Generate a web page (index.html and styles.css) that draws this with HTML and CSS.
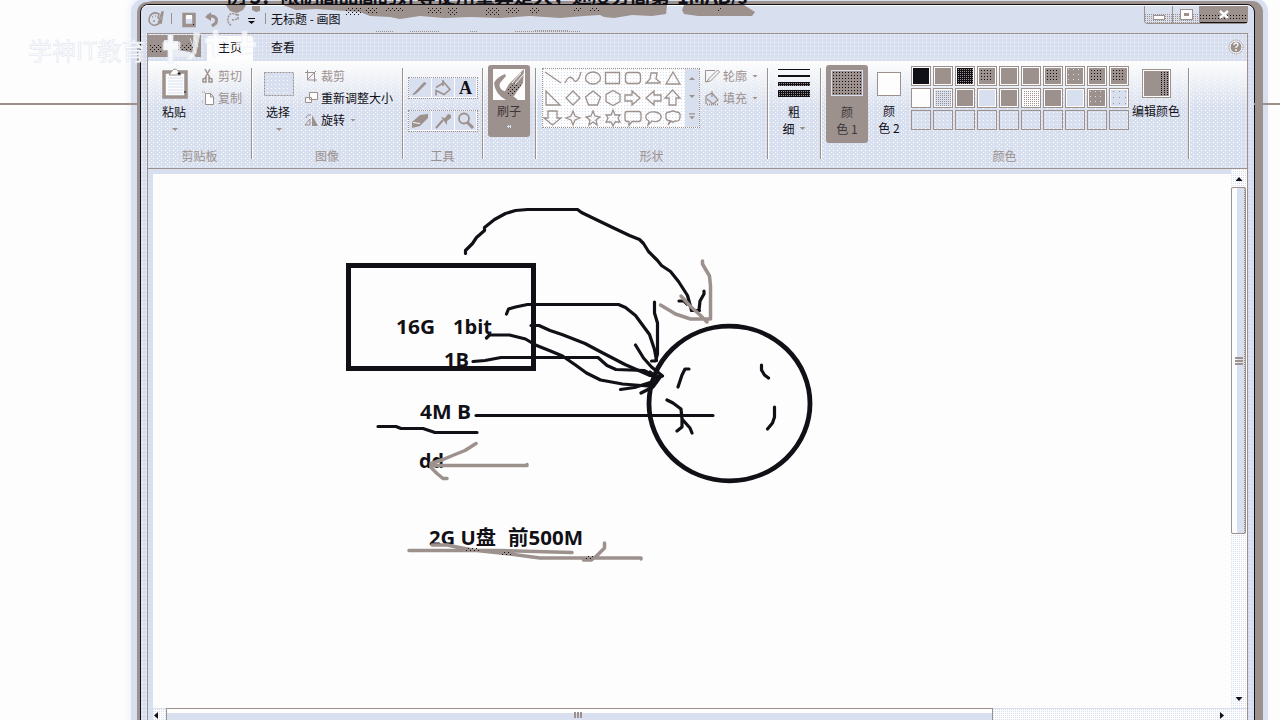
FILE: index.html
```html
<!DOCTYPE html>
<html lang="zh-CN">
<head>
<meta charset="utf-8">
<title>无标题 - 画图</title>
<link rel="stylesheet" href="styles.css">
</head>
<body>
<div class="desktop">
  <div class="rule rule-left"></div>
  <div class="rule rule-right"></div>

  <main class="window">
    <header class="titlebar">
      <svg class="glass" width="540" height="30" viewBox="226 5 540 30">
        <g fill="#9c918d"><path d="M226 5h20l-3 5-6 3-7-2zM252 6h8v5l-4 1-4-2zM283 5h384l-1 9-14 2-20-1-18 3-10-1-4-2-16 1-24 2-30-2-30 2-30-1-26 1-24-2-20 3-10-2-20-1-10-4-14-1-30-2-20 1z"/><path d="M684 5h60l11 7-3 4h-54l-14-2-2-4z"/></g>
        <g fill="url(#dots)"><path d="M346 7h15v8h-15zM366 7h11v6h-11zM385 7h18v5h-18zM427 7h14v6h-14zM448 7h10v8h-10zM486 7h14v9h-14zM506 7h14v7h-14zM530 7h9v6h-9zM573 7h8v5h-8zM590 7h10v5h-10zM718 7h4v5h-4z"/></g>
        <path d="M376 31.500h18M410 31.500h30M470 31.500h8M515 31.500h66M535 30.500h34" stroke="#9c918d" stroke-dasharray="1 1"/>
      </svg>
      <svg class="quick" width="122" height="28" viewBox="148 5 122 28">
        <g fill="none" stroke="#9c918d" stroke-width="1.5">
          <path d="M150 16q3-5 9-2l-1 4 3 2q-2 6-8 5-6-2-3-9zM158 24l4-12 1 0-2 12M152 17h1m2-1h1m-3 5h2"/>
          <path d="M171.500 13v11" stroke-width="1"/>
          <path d="M184 14.500h10v11h-10z" stroke-width="3.500"/>
          <path d="M186 15h6v4h-6z" fill="#fdfdfd" stroke="none"/>
          <path d="M193 24h1v1h-1z" fill="#111016" stroke="none"/>
          <path d="M207 16h5q6 1 4 7l-4 3" stroke-width="3"/>
          <path d="M205 17l6-5v9z" fill="#9c918d" stroke="none"/>
          <path d="M237 15q-7-4-9 3-1 5 4 8M232 20l6-1v-6" stroke-dasharray="2 1"/>
          <path d="M265.500 13v11" stroke-width="1"/>
        </g>
        <path d="M248 18h7v1h-7zM248 21h7l-3.500 3z" fill="#111016"/>
      </svg>
      <h1 class="title">无标题 - 画图</h1>
      <div class="captions">
        <span class="cap cap-min"><i></i></span><span class="cap cap-max"><i></i></span><span class="cap cap-close"><svg width="12" height="9" viewBox="0 0 12 9"><path d="M2 1l8 7M10 1l-8 7" stroke="#fdfdfd" stroke-width="2.500"/></svg></span>
      </div>
    </header>

    <div class="frame">
      <nav class="tabs">
        <span class="file-tab"><svg width="53" height="22" viewBox="0 0 53 22"><path d="M2 10h12v8H2zM28 8l5 3 6-3 8 3v5l-9-1-8 1z" fill="url(#dots)"/><path d="M20 0h5v6h5v9l12 2 6 5H20v-7h-4V5h4z" fill="#e8ecf5"/><path d="M42 3l6 16M46 1l4 11" stroke="#d8dfee"/></svg></span>
        <span class="tab active">主页</span>
        <span class="tab">查看</span>
        <svg class="help" width="16" height="16" viewBox="0 0 16 16"><circle cx="8" cy="8" r="6" fill="#9c918d" stroke="#fdfdfd"/><circle cx="8" cy="8" r="7" fill="none" stroke="#9c918d" stroke-dasharray="1 1"/><path d="M6 6q0-2 2-2t2 2q0 1-2 2v1m0 1v2" fill="none" stroke="#fdfdfd" stroke-width="1.300"/></svg>
      </nav>

      <section class="ribbon">
        <div class="group clip">
          <div class="body">
            <div class="big paste">
              <svg width="26" height="31" viewBox="0 0 26 31"><path d="M2 4h22v25H2z" fill="#fdfdfd" stroke="#9c918d" stroke-width="3.500"/><path d="M6 10h15M6 13h15M6 16h15M6 19h15M6 22h15M6 25h15" stroke="#d8dfee"/><path d="M7 7l3-4q3-4 6 0l3 4z" fill="#fdfdfd" stroke="#9c918d"/><path d="M16 5h2v1h-2zM23 23v2" stroke="#111016"/></svg>
              <span>粘贴</span><b class="arrow"></b>
            </div>
            <div class="stack">
              <div class="cmd dim"><svg width="14" height="16" viewBox="0 0 14 16"><path d="M4 1l5 9M9 1L4 10M2 11l3-1v4H2zM8 10l3 1v3H8z" fill="none" stroke="#9c918d" stroke-width="1.500"/></svg>剪切</div>
              <div class="cmd dim"><svg width="14" height="16" viewBox="0 0 14 16"><path d="M4.500 3.500h5l3 3v8h-8zM9.500 3.500v3.500h3" fill="#fdfdfd" stroke="#9c918d"/><path d="M1 2h1m1 0h1M1 12h1" stroke="#9c918d"/></svg>复制</div>
            </div>
          </div>
          <div class="label">剪贴板</div>
        </div>

        <div class="group image">
          <div class="body">
            <div class="big select">
              <svg width="32" height="31" viewBox="0 0 32 31"><path d="M1.500 4.500h29v23h-29z" fill="#d8dfee" stroke="#9c918d" stroke-dasharray="2 1"/><path d="M4 8.500h24M4 12.500h24M4 16.500h24M4 20.500h24M4 24.500h24" stroke="#fdfdfd" stroke-dasharray="1 3"/></svg>
              <span>选择</span><b class="arrow"></b>
            </div>
            <div class="stack">
              <div class="cmd dim"><svg width="14" height="14" viewBox="0 0 14 14"><path d="M3.500 1v10H13M1 3.500h9.500V13M4 10l8-8" fill="none" stroke="#9c918d"/></svg>裁剪</div>
              <div class="cmd"><svg width="14" height="14" viewBox="0 0 14 14"><path d="M5.500 1.500h8v7h-8zM1.500 6.500h6v5h-6z" fill="#fdfdfd" stroke="#9c918d"/></svg>重新调整大小</div>
              <div class="cmd"><svg width="14" height="14" viewBox="0 0 14 14"><path d="M8 2l6 11H8z" fill="#9c918d"/><path d="M1 12h5V6zM2 5q1-4 5-3" fill="none" stroke="#9c918d"/></svg>旋转<b class="arrow side"></b></div>
            </div>
          </div>
          <div class="label">图像</div>
        </div>

        <div class="group tools">
          <div class="body">
            <svg class="tool-row" width="70" height="22" viewBox="0 0 70 22"><path class="toolbox" d="M.5.5h68v20H.5zM23.500 1v19M46.500 1v19"/><path d="M5 17.500l11-12 2 1-10 10z" fill="#9c918d" stroke="#9c918d"/><path d="M28 10.500l8-5 6 7-6 5-8-4v5M35 3v6" fill="none" stroke="#9c918d" stroke-width="1.600"/><text x="51" y="17" class="letter">A</text></svg>
            <svg class="tool-row" width="70" height="22" viewBox="0 0 70 22"><path class="toolbox" d="M.5.5h68v20H.5zM23.500 1v19M46.500 1v19"/><path d="M4 12l8-7 8-1v4l-8 8-8 2z" fill="#9c918d"/><path d="M5 12.500l7 1" stroke="#fdfdfd"/><path d="M28 18l7-8" stroke="#9c918d" stroke-width="2"/><path d="M33 7l4 1 3-4 3 1v3l-4 3v4z" fill="#9c918d"/><circle cx="56" cy="8.500" r="5" fill="none" stroke="#9c918d" stroke-width="1.800"/><path d="M59 12l6 6" stroke="#9c918d" stroke-width="3"/></svg>
          </div>
          <div class="label">工具</div>
        </div>

        <div class="group brush">
          <div class="pressed">
            <svg width="34" height="31" viewBox="0 0 34 31"><path d="M1 0h32v31H1z" fill="#fdfdfd"/><path d="M2 14q1 11 12 17h12q-8-7-14-9-6-3-4-8l6-7-1-2q-8 3-11 9z" fill="#9c918d"/><path d="M32 0L17 15l-5 9 3 6 7-3 9-13z" fill="#9c918d"/><path d="M29 4L20 14M32 5L23 15" stroke="#fdfdfd"/><path d="M15 21l8-7 6 2-7 9-7 3z" fill="url(#dots)"/></svg>
            <span>刷子</span><b></b>
          </div>
        </div>

        <div class="group shapes">
          <div class="body">
            <div class="gallery">
              <svg width="142" height="60" viewBox="543 68 142 60">
                <g fill="none" stroke="#9c918d" stroke-width="1.300">
                  <path d="M545 72l16 11M565 83q4-9 8-4 4 7 8-7M605.500 72.500h14v11h-14zM646 83h14v-1l-4-3 1-6h-6l-1 6zM673 72l7 12h-14z"/>
                  <ellipse cx="593" cy="78" rx="7.500" ry="6"/><rect x="625.500" y="72.500" width="15" height="11" rx="3"/>
                  <path d="M546 91v14h14zM573 91l7 7-7 7-7-7zM593 91l7.500 6-3 8h-9l-3-8zM613 90.500l7 4v7l-7 4-7-4v-7zM625 95h7v-4l8 7-8 7v-4h-7zM661 95h-7v-4l-8 7 8 7v-4h7zM669 105v-7h-4l7.500-8 7.500 8h-4v7z"/>
                  <path d="M548 111v7h-4l8.500 7 8.500-7h-4v-7zM573 111l2 5 5 2-5 2-2 5-2-5-5-2 5-2zM593 111l2 5 5 1-4 3 1 5-4-3-4 3 1-5-4-3 5-1zM613 110l2 5h5l-2 3 2 4h-5l-2 4-2-4h-5l2-4-2-3h5z"/>
                  <path d="M627 111.500h12q2 0 2 3v4q0 3-2 3h-7l-3 4v-4h-2q-2 0-2-3v-4q0-3 2-3zM649 121q-4-2-3-5 2-5 9-4 7 1 6 6-2 5-9 3l-4 4zM670 121q-5-1-4-5-1-4 4-4 3-2 6 0 5 0 4 5 0 5-5 4-2 2-4 0l-3 4z"/>
                </g>
              </svg>
              <div class="spin"><i class="up"></i><i></i><i class="more"></i></div>
            </div>
            <div class="stack">
              <div class="cmd dim"><svg width="16" height="16" viewBox="0 0 16 16"><path d="M11 2.500H1.500V14l5-1 9-9-2-2-8 8-3 4" fill="none" stroke="#9c918d"/></svg>轮廓<b class="arrow side"></b></div>
              <div class="cmd dim"><svg width="16" height="16" viewBox="0 0 16 16"><path d="M2 14V6l6-3 6 7-5 4-6-5M8 1v6" fill="#d8dfee" stroke="#9c918d" stroke-width="1.200"/><path d="M3 14.500h12" stroke="#9c918d" stroke-width="2" stroke-dasharray="1 1"/></svg>填充<b class="arrow side"></b></div>
            </div>
          </div>
          <div class="label">形状</div>
        </div>

        <div class="group size">
          <div class="bars"><i></i><i></i><i></i><i></i></div>
          <span>粗</span><span class="inline">细<b class="arrow side"></b></span>
        </div>

        <div class="group colors">
          <div class="body">
            <div class="pressed color-one"><i></i><span>颜</span><span>色 1</span></div>
            <div class="color-two"><i></i><span>颜</span><span>色 2</span></div>
            <div class="palette">
              <i class="k"></i><i class="b"></i><i class="b dense"></i><i class="b dotted"></i><i class="b"></i><i class="b"></i><i class="b dotted"></i><i class="b sparse"></i><i class="b dotted"></i><i class="b dotted"></i>
              <i></i><i class="mix"></i><i class="b"></i><i class="l"></i><i class="b"></i><i class="mix pale"></i><i class="b"></i><i class="l"></i><i class="b sparse"></i><i class="l few"></i>
              <i class="e"></i><i class="e"></i><i class="e"></i><i class="e"></i><i class="e"></i><i class="e"></i><i class="e"></i><i class="e"></i><i class="e"></i><i class="e"></i>
            </div>
            <div class="edit"><i></i><span>编辑颜色</span></div>
          </div>
          <div class="label">颜色</div>
        </div>
      </section>

      <section class="workspace">
        <svg class="paper" width="1078" height="534" viewBox="153 174 1078 534">
          <defs><pattern id="dots" width="4" height="4" patternUnits="userSpaceOnUse"><path d="M0 0h1v1H0zM2 2h1v1H2z" fill="#111016"/></pattern></defs>
          <g class="words">
            <text x="396" y="334" textLength="39" lengthAdjust="spacingAndGlyphs">16G</text><text x="453" y="334" textLength="39" lengthAdjust="spacingAndGlyphs">1bit</text>
            <text x="444" y="367" textLength="25" lengthAdjust="spacingAndGlyphs">1B</text>
            <text x="420" y="419" textLength="51" lengthAdjust="spacingAndGlyphs">4M B</text>
            <text x="419" y="468" textLength="25" lengthAdjust="spacingAndGlyphs">dd</text>
            <text x="429" y="545" textLength="67" lengthAdjust="spacingAndGlyphs">2G U盘</text><text x="508" y="545" textLength="75" lengthAdjust="spacingAndGlyphs">前500M</text>
          </g>
          <g class="ink">
            <path stroke-width="5" class="box" d="M348.500 265.500h185v103h-185z"/>
            <ellipse class="disc" cx="729.500" cy="403.500" rx="80.500" ry="77.300"/>
            <path d="M465.500 253.500v-3l7-7 4-6 8-7v-3l10-8 11-6 10-3 12-1h50l4 3 29 14 19 9 10 4 4 4 5 8 9 9 4 5 9 6 8 10 9 14 3 11 1 4h8M679 301h5l3 3M704 291v3l-4 7-1 9"/>
            <path d="M506.500 314l2-5 7-2 12-2.500h91l7 3 10 8 14 19 5 15 2 11M654.500 302v11l3 10v31l-2 7h-4"/>
            <path d="M531 325.500h8l11 5 12 4 23 9 15 8 25 13 25 11 11 1"/>
            <path d="M486.500 338l3-3h20l16 4 10 6 15 6 12 5 13 9 11 8 14 7 22 4 25 2 9-4"/>
            <path d="M473 361.500l12-1 16-3h97l9 8 9 4 28 1 10 5M635.500 345l8 13 8 9 11 9M620.500 389.500l14-2 22-7M641 393l12-6 8-11M650 372l8 7"/>
            <path d="M476 415.500h237M689 369h-4l-3 6-4 12M667 400l6 3 8 6 1 10 8 9 2 5M677 431l5-4v-9M761.500 365v5l3 5 4 3M774.500 407v10l-2 6-5 6"/>
            <path d="M378 426.500h18l5 2h22l12 4h42"/>
          </g>
          <g class="ink faded">
            <path d="M702.500 261v3l7 12 1 10v33h-20l-15-5-15-9M681 296l9 10 10 9 7 7"/>
            <path d="M476 443.500l-11 7-10 4-12 5-12 4v4l6 6 6 5h4M431 465.500h96v-1"/>
            <path d="M409 550.500h90l73 2M432 545h15l25 5 38 4 30 4h101v1M604.500 543v5l-8 8-5 4h-8"/>
          </g>
          <path d="M466 548h14v4h-14zM502 551h10v4h-10zM586 556h8v4h-8z" fill="url(#dots)"/>
        </svg>
        <div class="vscroll"><b class="tri-up"></b><div class="vthumb"><i></i></div><b class="tri-down"></b></div>
        <div class="hscroll"><b class="tri-left"></b><div class="hthumb"><i></i></div><b class="tri-right"></b></div>
      </section>
    </div>
  </main>

  <div class="behind">例 3：限制高品高的好等使用量算是大，速度分高第&nbsp; 1MAB/s</div>
  <div class="watermark">学神IT教育</div>
  <svg class="mark" width="100" height="40" viewBox="0 0 100 40"><path d="M10 8h5v7h7v8h-7v13h-5V23H5v-8h5zM36 5l6 1-4 20-5 7-4-1 6-8zM55 3h5v8h9v5h-9v13h-5V16h-8v-5h8zM84 4h5v11h9v5H78v-5h6zM61 25l12-7M80 28l15-2" fill="#fdfdfd" stroke="#e9edf6" opacity=".75"/></svg>
</div>
</body>
</html>
```

FILE: styles.css
```css
:root {
  --white: #fdfdfd;
  --blue: #d8dfee;
  --brown: #9c918d;
  --ink: #111016;
  --dot-w: conic-gradient(from 270deg at 1px 1px, var(--white) 90deg, transparent 0);
  --dot-b: conic-gradient(from 270deg at 1px 1px, var(--brown) 90deg, transparent 0);
  --dot-k: conic-gradient(from 270deg at 1px 1px, var(--ink) 90deg, transparent 0);
  --dot-l: conic-gradient(from 270deg at 1px 1px, var(--blue) 90deg, transparent 0);
}
* { box-sizing: border-box; }
body {
  margin: 0;
  background: var(--white);
  color: var(--ink);
  font: 12px/16px "Noto Sans CJK SC", sans-serif;
}
svg { display: block; flex: none; }
.desktop { position: relative; width: 1280px; height: 720px; overflow: hidden; padding: 4px 25px 0 140px; }
.rule { position: absolute; top: 103px; height: 2px; background: var(--brown); }
.rule-left { left: 0; width: 140px; }
.rule-right { right: 0; width: 26px; }
.behind {
  position: absolute; left: 226px; top: -15px; width: 540px; height: 19px;
  font-size: 20px; line-height: 21px; font-weight: 700; letter-spacing: -.55px; white-space: nowrap; overflow: hidden;
}

/* window chrome */
.window {
  height: 730px;
  border: 1px solid var(--ink);
  border-radius: 8px 8px 0 0;
  background: var(--dot-w) 1px 1px / 4px 4px, var(--blue);
  box-shadow: 5px 0 0 3px var(--brown), -1px 0 0 2px var(--brown), 7px 0 0 6px var(--blue), -4px 0 0 5px var(--blue), 0 0 4px 12px #f1f4fa;
  padding: 0 7px 0 6px;
}
.titlebar { position: relative; display: flex; height: 28px; background: var(--blue); margin: 0 -5px; padding-left: 6px; border-radius: 6px 6px 0 0; border-top: 1px solid var(--white); }
.quick { position: relative; margin-top: -1px; }
.title { position: relative; margin: 5px 0 0 1px; font-size: 12px; line-height: 16px; font-weight: 400; }
.glass { position: absolute; top: -1px; left: 84px; }
.captions { display: flex; margin-left: auto; height: 18px; margin-right: 4px; border: 1px solid var(--brown); border-top: 0; border-radius: 0 0 4px 4px; }
.cap { display: flex; align-items: center; justify-content: center; background: var(--dot-b) 0 0 / 3px 3px, var(--blue); background: linear-gradient(var(--blue) 8px, transparent 8px), var(--dot-b) 0 0 / 2px 2px, var(--blue); border-right: 1px solid var(--brown); width: 28px; }
.cap-max { width: 27px; }
.cap-min i { width: 12px; height: 5px; border: 1px solid var(--brown); background: var(--white); margin-top: 5px; }
.cap-max i { width: 11px; height: 9px; border: 3px solid var(--white); outline: 1px solid var(--brown); background: var(--brown); }
.cap-close { width: 47px; background: linear-gradient(var(--brown), var(--brown)) 0 0 / 100% 9px no-repeat, linear-gradient(var(--brown), var(--brown)) 0 14px / 100% 4px no-repeat, var(--dot-k) 0 0 / 3px 3px, var(--brown); border-right: 0; border-bottom: 1px solid var(--ink); }

.frame { border: 1px solid var(--brown); border-bottom: 0; height: 690px; display: flex; flex-direction: column; width: 1101px; }
.tabs { display: flex; height: 27px; flex: none; padding-top: 1px; }
.file-tab { width: 53px; height: 22px; background: var(--brown); }
.tab { width: 48px; margin-left: 5px; text-align: center; line-height: 24px; }
.tab.active { background: var(--white); line-height: 22px; border: 1px solid var(--blue); border-bottom: 0; border-radius: 3px 3px 0 0; }
.help { margin: 4px 3px 0 auto; }

/* ribbon */
.ribbon {
  display: flex; flex: none; height: 108px; padding-top: 7px;
  border-bottom: 1px solid var(--brown);
  background:
    linear-gradient(var(--white), rgba(253,253,253,0)) 0 0 / 100% 48px no-repeat,
    var(--dot-w) 1px 1px / 4px 4px, var(--dot-w) 3px 3px / 8px 4px, var(--blue);
}
.group { height: 91px; border-right: 1px solid var(--brown); box-shadow: 1px 0 0 var(--white); display: flex; flex-direction: column; flex: none; }
.body { display: flex; height: 80px; flex: none; }
.label { color: var(--brown); text-align: center; line-height: 16px; }
.clip { width: 104px; }
.image { width: 151px; }
.tools { width: 80px; }
.brush { width: 53px; }
.shapes { width: 232px; }
.size { width: 53px; }
.colors { width: 368px; }
.big { display: flex; flex-direction: column; align-items: center; width: 54px; }
.big span { margin: 5px 2px 0 0; }
.arrow { width: 6px; height: 3px; background: var(--brown); clip-path: polygon(0 0, 100% 0, 50% 100%); margin-top: 8px; }
.arrow.side { margin: 0 0 0 5px; }
.stack { display: flex; flex-direction: column; }
.cmd { display: flex; align-items: center; height: 22px; white-space: nowrap; }
.cmd svg { margin-right: 3px; }
.dim { color: var(--brown); }
.clip .stack { margin: -3px 0 0 -1px; }
.image .stack { margin: -3px 0 0 -2px; }
.tools .body { flex-direction: column; gap: 11px; padding: 9px 0 0 5px; }
.toolbox { fill: var(--blue); stroke: var(--white); }
.tool-row { outline: 1px dotted var(--brown); outline-offset: -1px; }
.letter { font: 700 18px "Liberation Serif", serif; fill: var(--ink); }

.pressed { width: 42px; background: var(--brown); border-radius: 3px; display: flex; flex-direction: column; align-items: center; }
.brush .pressed { height: 72px; margin: -3px 0 0 5px; padding-top: 4px; }
.pressed span { color: #3c373a; }
.brush .pressed span { margin-top: 3px; }
.brush .pressed b { width: 4px; height: 3px; background: var(--dot-b) 0 0 / 2px 2px, var(--blue); margin-top: 6px; }

.gallery { display: flex; width: 158px; height: 60px; margin-left: 6px; border: 1px dotted var(--brown); background: var(--dot-l) 0 0 / 3px 3px, var(--white); }
.gallery svg { margin-top: -1px; }
.spin { width: 14px; background: var(--blue); display: flex; flex-direction: column; align-items: center; justify-content: space-around; }
.spin i { width: 6px; height: 3px; background: var(--brown); clip-path: polygon(0 0, 100% 0, 50% 100%); }
.spin .up { transform: scaleY(-1); }
.spin .more { height: 6px; clip-path: polygon(0 0, 100% 0, 100% 20%, 0 20%, 0 50%, 100% 50%, 50% 100%, 0 50%); }
.shapes .stack { margin: -3px 0 0 4px; }

.size { align-items: center; line-height: 17px; }
.bars { width: 32px; display: flex; flex-direction: column; gap: 5px; margin: 1px 0 6px; }
.bars i { background: var(--ink); height: 1px; }
.bars i:nth-child(2) { height: 2px; }
.bars i:nth-child(3) { height: 4px; background: var(--dot-b) 1px 1px / 2px 2px, var(--ink); }
.bars i:nth-child(4) { height: 7px; margin-top: -1px; background: var(--dot-b) 1px 1px / 2px 2px, var(--ink); }
.inline { display: flex; align-items: center; padding-left: 0; }

.colors .body { padding-left: 5px; }
.color-one { height: 78px; margin-top: -3px; padding-top: 4px; line-height: 17px; }
.color-one i { width: 34px; height: 28px; border: 3px solid var(--brown); outline: 1px solid var(--blue); outline-offset: -2px; margin-bottom: 6px; background: var(--dot-k) 0 0 / 3px 3px, var(--brown); }
.color-two { width: 42px; display: flex; flex-direction: column; align-items: center; padding-top: 4px; line-height: 17px; }
.color-two i { width: 24px; height: 24px; margin-bottom: 6px; background: var(--white); border: 1px solid var(--brown); }
.palette { display: grid; grid-template-columns: repeat(10, 20px); grid-auto-rows: 20px; gap: 2px; margin: -2px 0 0 1px; }
.palette i { border: 1px solid var(--brown); background: var(--white); box-shadow: inset 0 0 0 1px var(--white); }
.palette .k { background: var(--ink); }
.palette .b { background-color: var(--brown); }
.palette .l { background-color: var(--blue); }
.palette .dense { background: var(--dot-b) 0 0 / 2px 2px, var(--ink); }
.palette .dotted { background: var(--dot-k) 0 0 / 3px 3px content-box, var(--brown); background-clip: content-box, border-box; padding: 3px; }
.palette .sparse { background: var(--dot-l) 2px 2px / 5px 5px, var(--brown); }
.palette .mix { background: var(--dot-b) 0 0 / 2px 2px, var(--blue); }
.palette .pale { background: var(--dot-b) 0 0 / 2px 2px, var(--white); }
.palette .few { background: var(--dot-b) 3px 2px / 6px 6px, var(--blue); }
.palette .e { background: var(--dot-w) 1px 1px / 4px 4px, var(--blue); box-shadow: none; }
.edit { width: 54px; display: flex; flex-direction: column; align-items: center; white-space: nowrap; }
.edit i { width: 29px; height: 29px; margin: 1px 0 5px; border: 1px solid var(--brown); box-shadow: inset 0 0 0 1px var(--white); background: linear-gradient(90deg, var(--brown) 18px, transparent 0), var(--dot-k) 0 0 / 3px 2px, var(--brown); }

/* drawing area */
.workspace { flex: 1; display: grid; grid-template-columns: 1078px 16px; grid-template-rows: 534px 18px; padding: 5px 0 0 5px; background: var(--blue); }
.paper { background: var(--white); }
.words text { font: 700 20px "Open Sans", "Noto Sans CJK SC", sans-serif; fill: var(--ink); }
.ink { fill: none; stroke: var(--ink); stroke-width: 3.2; stroke-linecap: round; stroke-linejoin: round; }
.box { stroke-width: 5; stroke-linejoin: miter; }
.disc { stroke-width: 4.8; }
.faded { stroke: var(--brown); stroke-width: 3.500; }
.vscroll { margin-top: -5px; display: flex; flex-direction: column; align-items: center; background: var(--dot-l) 0 0 / 2px 2px, var(--white); padding-top: 8px; }
.tri-up, .tri-down { width: 7px; height: 4px; background: var(--ink); clip-path: polygon(50% 0, 100% 100%, 0 100%); }
.tri-down { transform: scaleY(-1); margin-top: 163px; }
.vthumb { width: 15px; height: 347px; margin: 6px 1px 0 0; border: 1px solid var(--brown); border-radius: 2px; background: linear-gradient(90deg, transparent 5px, var(--blue) 5px 11px, transparent 11px), linear-gradient(90deg, var(--white) 8px, transparent 8px), var(--dot-b) 0 0 / 2px 2px, var(--blue); display: flex; align-items: center; justify-content: center; }
.vthumb i { width: 8px; height: 8px; background: repeating-linear-gradient(var(--brown) 0 2px, transparent 2px 3px); }
.hscroll { grid-column: 1 / 3; display: flex; align-items: flex-start; background: var(--dot-l) 0 0 / 2px 2px, var(--white); border-top: 1px solid var(--blue); }
.tri-left, .tri-right { width: 4px; height: 7px; background: var(--ink); clip-path: polygon(0 50%, 100% 0, 100% 100%); margin-top: 3px; }
.tri-left { margin-left: 1px; }
.tri-right { transform: scaleX(-1); margin-left: 227px; }
.hthumb { width: 827px; height: 18px; margin-left: 8px; margin-top: -1px; border: 1px solid var(--brown); background: linear-gradient(var(--white) 4px, var(--blue) 4px); display: flex; justify-content: center; }
.hthumb i { width: 8px; height: 6px; margin: 3px 3px 0 0; background: repeating-linear-gradient(90deg, var(--brown) 0 2px, transparent 2px 3px); }

/* translucent logo laid over the recording */
.watermark { position: absolute; left: 28px; top: 36px; width: 128px; font-size: 24px; line-height: 28px; white-space: nowrap; color: var(--white); -webkit-text-stroke: .6px #e2e7f2; }
.mark { position: absolute; left: 158px; top: 27px; }
```
